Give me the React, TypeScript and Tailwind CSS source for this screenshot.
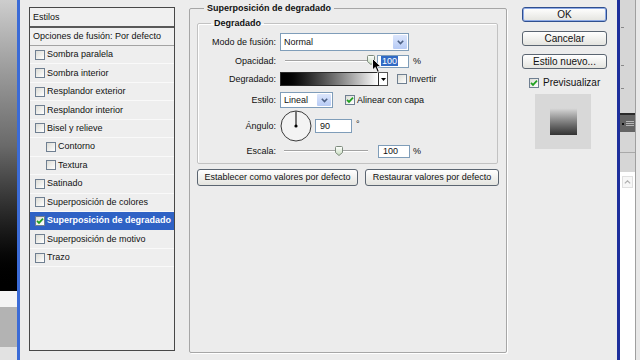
import React from 'react';

type Row = { label: string; sub?: boolean; on?: boolean };

const ROWS: Row[] = [
  { label: 'Sombra paralela' },
  { label: 'Sombra interior' },
  { label: 'Resplandor exterior' },
  { label: 'Resplandor interior' },
  { label: 'Bisel y relieve' },
  { label: 'Contorno', sub: true },
  { label: 'Textura', sub: true },
  { label: 'Satinado' },
  { label: 'Superposición de colores' },
  { label: 'Superposición de degradado', on: true },
  { label: 'Superposición de motivo' },
  { label: 'Trazo' },
];

function Check({ on }: { on?: boolean }) {
  return (
    <span className="w-[10px] h-[10px] shrink-0 border border-[#6f7f91] bg-linear-to-br from-[#dcdcd6] to-white flex items-center justify-center">
      {on && (
        <svg width="8" height="8" viewBox="0 0 8 8">
          <path d="M1 3.8 L3 5.9 L7 1.6" fill="none" stroke="#21a121" strokeWidth="1.7" />
        </svg>
      )}
    </span>
  );
}

function DropArrow() {
  return (
    <span className="w-[14px] h-full bg-linear-to-b from-[#dce6fc] to-[#b7cbf5] rounded-[1px] flex items-center justify-center">
      <svg width="7" height="5" viewBox="0 0 7 5">
        <path d="M0.8 0.8 L3.5 3.6 L6.2 0.8" fill="none" stroke="#4d6185" strokeWidth="1.6" />
      </svg>
    </span>
  );
}

function Thumb({ x, y, id }: { x: number; y: number; id: string }) {
  return (
    <>
      <defs>
        <linearGradient id={id} x1="0" y1="0" x2="0" y2="1">
          <stop offset="0" stopColor="#ffffff" />
          <stop offset="1" stopColor="#c6dcbc" />
        </linearGradient>
      </defs>
      <path
        d={`M${x + 0.5} ${y + 1.5} Q${x + 0.5} ${y + 0.5} ${x + 1.5} ${y + 0.5} H${x + 6.5} Q${x + 7.5} ${y + 0.5} ${x + 7.5} ${y + 1.5} V${y + 6.5} L${x + 4} ${y + 9.5} L${x + 0.5} ${y + 6.5} Z`}
        fill={`url(#${id})`}
        stroke="#7d8b7d"
      />
    </>
  );
}

function Slider({ w, x1, x2, tx, ty, id }: { w: number; x1: number; x2: number; tx: number; ty: number; id: string }) {
  return (
    <svg width={w} height="14" viewBox={`0 0 ${w} 14`} className="shrink-0">
      <line x1={x1} y1="6.5" x2={x2} y2="6.5" stroke="#a3a3a3" />
      <line x1={x1} y1="7.5" x2={x2} y2="7.5" stroke="#ffffff" />
      <Thumb x={tx} y={ty} id={id} />
    </svg>
  );
}

function Field({ w, h, children }: { w: number; h: number; children?: React.ReactNode }) {
  return (
    <div className="border border-[#7f9db9] bg-white flex items-center pl-[4px]" style={{ width: w, height: h }}>
      {children}
    </div>
  );
}

function StyleList() {
  return (
    <div className="mt-[7px] w-[146px] h-[344px] shrink-0 border border-[#474747] bg-[#eeeeee] flex flex-col">
      <div className="h-[20px] pl-[3px] flex items-center bg-[#f0f0f0] border-b-2 border-[#595959]">Estilos</div>
      <div className="h-[18px] pl-[3px] flex items-center bg-[#f0f0f0] border-b border-[#a3a3a3]">
        Opciones de fusión: Por defecto
      </div>
      {ROWS.map((r) => (
        <div
          key={r.label}
          className={`h-[18.45px] flex items-center gap-[2px] border-b ${r.sub ? 'pl-[16px]' : 'pl-[5px]'} ${
            r.on ? 'bg-[#2f62c5] text-white font-bold border-[#2f62c5]' : 'border-[#f9f9f9]'
          }`}
        >
          <Check on={r.on} />
          <span>{r.label}</span>
        </div>
      ))}
    </div>
  );
}

function Label({ children }: { children: React.ReactNode }) {
  return <span className="w-[82px] shrink-0 text-right pr-[4px]">{children}</span>;
}

function Panel() {
  return (
    <fieldset className="ml-[14px] mt-[3px] w-[318px] h-[350px] shrink-0 border border-[#a6a6a6] rounded-[2px] shadow-[1px_1px_0_#ffffff]">
      <legend className="ml-[14px] px-[3px] font-bold leading-[11px]">Superposición de degradado</legend>

      <fieldset className="ml-[7px] mt-[4px] w-[301px] h-[146px] border border-[#c2c2c2] rounded-[2px] shadow-[inset_1px_1px_0_#ffffff]">
        <legend className="ml-[13px] px-[3px] font-bold leading-[11px]">Degradado</legend>

        <div className="mt-[4px] h-[18px] flex items-center">
          <Label>Modo de fusión:</Label>
          <div className="h-[18px] w-[129px] border border-[#7f9db9] bg-white flex items-stretch">
            <span className="flex-1 pl-[3px] flex items-center">Normal</span>
            <span className="p-[1px] flex">
              <DropArrow />
            </span>
          </div>
        </div>

        <div className="mt-[3px] h-[14px] flex items-center">
          <Label>Opacidad:</Label>
          <div className="relative flex">
            <Slider w={97} x1={5} x2={92} tx={87} ty={1} id="th1" />
            <svg width="11" height="16" viewBox="0 0 11 16" className="absolute left-[92px] top-[4px]">
              <path d="M0.5 0.5 L0.5 12 L3.3 9.4 L5.4 14.3 L7.3 13.5 L5.3 8.7 L9 8.7 Z" fill="#000" stroke="#fff" strokeWidth="0.9" />
            </svg>
          </div>
          <div className="w-[32px] h-[13px] border border-[#7f9db9] bg-white flex items-center pl-[3px]">
            <span className="bg-[#316ac5] text-white px-[1px] leading-[10px]">100</span>
          </div>
          <span className="ml-[4px]">%</span>
        </div>

        <div className="mt-[4px] h-[14px] flex items-center">
          <Label>Degradado:</Label>
          <div className="w-[99px] h-[14px] border border-[#2a2a2a] bg-linear-to-r from-black to-white" />
          <div className="w-[9px] h-[14px] border border-l-0 border-[#555555] bg-white flex items-center justify-center">
            <svg width="5" height="3" viewBox="0 0 5 3">
              <path d="M0 0 H5 L2.5 3 Z" fill="#000" />
            </svg>
          </div>
          <span className="ml-[9px]">
            <Check />
          </span>
          <span className="ml-[2px]">Invertir</span>
        </div>

        <div className="mt-[6px] h-[16px] flex items-center">
          <Label>Estilo:</Label>
          <div className="h-[16px] w-[53px] border border-[#7f9db9] bg-white flex items-stretch">
            <span className="flex-1 pl-[3px] flex items-center">Lineal</span>
            <span className="p-[1px] flex">
              <DropArrow />
            </span>
          </div>
          <span className="ml-[12px]">
            <Check on />
          </span>
          <span className="ml-[2px]">Alinear con capa</span>
        </div>

        <div className="mt-[2px] h-[32px] flex items-center">
          <Label>Ángulo:</Label>
          <svg width="32" height="32" viewBox="0 0 32 32" className="shrink-0">
            <circle cx="16" cy="16" r="15" fill="#f3f3f3" stroke="#3a3a3a" />
            <line x1="16" y1="16" x2="16" y2="1.5" stroke="#222" strokeWidth="1.2" />
            <circle cx="16" cy="16" r="1.6" fill="#000" />
          </svg>
          <div className="ml-[3px]">
            <Field w={37} h={14}>90</Field>
          </div>
          <span className="ml-[4px] self-start mt-[9px]">°</span>
        </div>

        <div className="mt-[2px] h-[14px] flex items-center">
          <Label>Escala:</Label>
          <Slider w={98} x1={4} x2={88} tx={55} ty={2} id="th2" />
          <Field w={32} h={13}>100</Field>
          <span className="ml-[3px]">%</span>
        </div>
      </fieldset>

      <div className="mt-[5px] ml-[7px] flex gap-[7px]">
        <div className="w-[161px] h-[17px] rounded-[3px] border border-[#5b6571] bg-linear-to-b from-white to-[#e4e4df] flex items-center justify-center">
          Establecer como valores por defecto
        </div>
        <div className="w-[134px] h-[17px] rounded-[3px] border border-[#5b6571] bg-linear-to-b from-white to-[#e4e4df] flex items-center justify-center">
          Restaurar valores por defecto
        </div>
      </div>
    </fieldset>
  );
}

function Side() {
  return (
    <div className="ml-[15px] w-[85px] shrink-0 flex flex-col text-[10px] leading-[12px]">
      <div className="mt-[7px] h-[15px] rounded-[3px] border border-[#2f4f8f] shadow-[inset_0_0_0_1px_#8eaae6] bg-linear-to-b from-white to-[#e4e4df] flex items-center justify-center">
        OK
      </div>
      <div className="mt-[9px] h-[15px] rounded-[3px] border border-[#5b6571] bg-linear-to-b from-white to-[#e4e4df] flex items-center justify-center">
        Cancelar
      </div>
      <div className="mt-[8px] h-[15px] rounded-[3px] border border-[#5b6571] bg-linear-to-b from-white to-[#e4e4df] flex items-center justify-center">
        Estilo nuevo...
      </div>
      <div className="mt-[9px] h-[10px] pl-[7px] flex items-center gap-[4px]">
        <Check on />
        <span>Previsualizar</span>
      </div>
      <div className="mt-[6px] ml-[13px] w-[56px] h-[55px] bg-[#d8d8d8] flex items-center justify-center">
        <div className="w-[27px] h-[27px] bg-linear-to-b from-[#dadada] to-[#333333]" />
      </div>
    </div>
  );
}

function RightStrip() {
  return (
    <div className="w-[20px] shrink-0 flex">
      <div className="w-[15px] flex flex-col bg-[#d6d6d6]">
        <div className="h-[113px] flex flex-col pl-[1px]">
          <div className="mt-[27px] w-[3px] h-[1px] bg-[#8a8a8a]" />
          <div className="mt-[37px] w-[3px] h-[1px] bg-[#8a8a8a]" />
          <div className="mt-[22px] w-[3px] h-[1px] bg-[#8a8a8a]" />
        </div>
        <div className="h-[19px] bg-[#646464] border-t-2 border-[#2a2a2a] flex items-center pl-[2px] gap-[2px]">
          <div className="w-[2px] h-[2px] bg-[#111]" />
          <div className="flex flex-col gap-[1px]">
            <div className="w-[8px] h-[1px] bg-[#b5b5b5]" />
            <div className="w-[8px] h-[1px] bg-[#b5b5b5]" />
            <div className="w-[8px] h-[1px] bg-[#b5b5b5]" />
          </div>
        </div>
        <div className="h-[40px] flex flex-col">
          <div className="mt-[20px] h-[1px] bg-[#a9a9a9]" />
        </div>
        <div className="flex-1 bg-white pt-[4px] pl-[2px]">
          <div className="w-[11px] h-[12px] border border-[#e0e0e0] bg-[#f7f7f7] flex items-center justify-center">
            <svg width="7" height="4" viewBox="0 0 7 4">
              <path d="M0.8 3.4 L3.5 0.8 L6.2 3.4" fill="none" stroke="#b0b0b0" strokeWidth="1.2" />
            </svg>
          </div>
        </div>
      </div>
      <div className="w-[1px] bg-[#9f9f9f]" />
      <div className="w-[4px] bg-[#e8e8e8]" />
    </div>
  );
}

export default function App() {
  return (
    <div className="w-[640px] h-[360px] flex overflow-hidden bg-[#ececec] text-[#111] font-['Liberation_Sans',Arial,sans-serif] text-[9px] leading-[11px]">
      <div className="w-[17px] shrink-0 flex flex-col">
        <div className="h-[291px] bg-linear-to-b from-[#cdcdcd] via-[#6a6a6a] to-black" />
        <div className="h-[16px] bg-[#f4f4f4]" />
        <div className="h-[40px] bg-[#b3b3b3]" />
        <div className="flex-1 bg-[#e2e2e2]" />
      </div>
      <div className="w-[3px] shrink-0 bg-[#3b6bd6]" />
      <div className="w-[597px] shrink-0 flex items-start pl-[9px]">
        <StyleList />
        <Panel />
        <Side />
      </div>
      <div className="w-[3px] shrink-0 bg-[#1d2f9c]" />
      <RightStrip />
    </div>
  );
}
